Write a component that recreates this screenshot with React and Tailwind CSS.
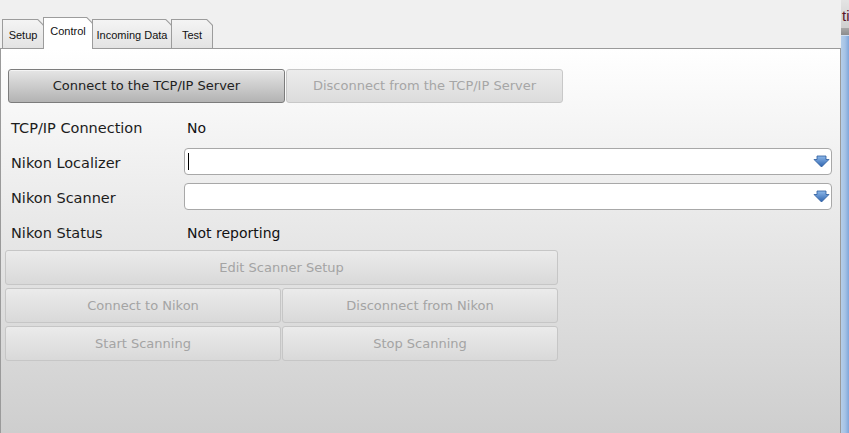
import React from 'react';

const tabs = [
    { name: 'Setup', w: 'w-[42px]' },
    { name: 'Control', w: 'w-[50px]', active: true },
    { name: 'Incoming Data', w: 'w-[80px]' },
    { name: 'Test', w: 'w-[42px]' },
];

const Tab = ({ name, w, active }) => (
    <div
        className={`${w} ${active ? 'h-[32px] -mb-[1px] z-10' : 'h-[29px]'} bg-[#9c9c9c] pt-[1px] px-[1px] -mr-[1px] [clip-path:polygon(0_0,calc(100%-6px)_0,100%_6px,100%_100%,0_100%)]`}
    >
        <div
            className={`h-full flex items-center justify-center text-[11px] text-[#111] [clip-path:polygon(0_0,calc(100%-5.5px)_0,100%_5.5px,100%_100%,0_100%)] ${active ? 'bg-white pb-[4px]' : 'bg-gradient-to-b from-[#f4f4f4] to-[#e3e3e3] pt-[2px]'}`}
        >
            {name}
        </div>
    </div>
);

const DisabledButton = ({ children, className = '' }) => (
    <div
        className={`h-[35px] flex items-center justify-center rounded-[3px] border border-[#c6c6c6] bg-gradient-to-b from-[#ebebeb] to-[#d9d9d9] text-[13px] text-[#a4a4a4] ${className}`}
    >
        {children}
    </div>
);

const Arrow = () => (
    <svg width="17" height="13" viewBox="0 0 17 13">
        <defs>
            <linearGradient id="ar" x1="0" y1="0" x2="0" y2="1">
                <stop offset="0" stopColor="#8db8ea" />
                <stop offset="1" stopColor="#2c62ad" />
            </linearGradient>
        </defs>
        <polygon points="4,1 13,1 13,4.5 16,4.5 8.5,12 1,4.5 4,4.5" fill="url(#ar)" stroke="#2b5a9c" strokeWidth="0.8" />
    </svg>
);

const Combo = ({ caret }) => (
    <div className="flex-1 h-[27px] rounded-[4px] border border-[#a8a8a8] bg-white flex items-center pl-[3px] pr-[1px] mr-[8px]">
        <div className="flex-1 flex items-center">
            {caret && <div className="w-[1px] h-[17px] bg-black" />}
        </div>
        <Arrow />
    </div>
);

const Row = ({ label, children }) => (
    <div className="h-[27px] flex items-center">
        <div className="w-[183px] pl-[10px] pt-[4px] text-[14.5px] text-[#1c1c1c]">{label}</div>
        {children}
    </div>
);

export default function App() {
    return (
        <div className="w-[849px] h-[433px] flex overflow-hidden bg-[#f0f0f0] font-['DejaVu_Sans',sans-serif]">
            <div className="w-[841px] flex flex-col">
                <div className="h-[48px] flex items-end pl-[2px] font-['Liberation_Sans',Arial,sans-serif]">
                    {tabs.map((t) => (
                        <Tab key={t.name} {...t} />
                    ))}
                </div>
                <div className="flex-1 border-t border-l border-r border-[#9a9a9a] bg-gradient-to-b from-white to-[#cecece] flex flex-col">
                    <div className="flex mt-[20px] ml-[7px] h-[34px]">
                        <div className="w-[277px] flex items-center justify-center rounded-[3px] border border-[#7c7c7c] bg-gradient-to-b from-[#e6e6e6] to-[#b3b3b3] text-[13px] text-[#222] shadow-[inset_0_1px_0_#f4f4f4]">
                            Connect to the TCP/IP Server
                        </div>
                        <div className="w-[277px] ml-[1px] flex items-center justify-center rounded-[3px] border border-[#c8c8c8] bg-gradient-to-b from-[#ececec] to-[#dcdcdc] text-[13px] text-[#a6a6a6]">
                            Disconnect from the TCP/IP Server
                        </div>
                    </div>
                    <div className="flex flex-col gap-[8px] mt-[10px]">
                        <Row label="TCP/IP Connection">
                            <div className="pl-[3px] pt-[4px] text-[14px] text-[#111]">No</div>
                        </Row>
                        <Row label="Nikon Localizer">
                            <Combo caret />
                        </Row>
                        <Row label="Nikon Scanner">
                            <Combo />
                        </Row>
                        <Row label="Nikon Status">
                            <div className="pl-[3px] pt-[4px] text-[14px] text-[#111]">Not reporting</div>
                        </Row>
                    </div>
                    <div className="w-[553px] ml-[4px] mt-[5px] flex flex-col gap-[3px]">
                        <DisabledButton>Edit Scanner Setup</DisabledButton>
                        <div className="flex gap-[1px]">
                            <DisabledButton className="flex-1">Connect to Nikon</DisabledButton>
                            <DisabledButton className="flex-1">Disconnect from Nikon</DisabledButton>
                        </div>
                        <div className="flex gap-[1px]">
                            <DisabledButton className="flex-1">Start Scanning</DisabledButton>
                            <DisabledButton className="flex-1">Stop Scanning</DisabledButton>
                        </div>
                    </div>
                </div>
            </div>
            <div className="w-[8px] flex flex-col overflow-hidden">
                <div className="h-[28px] bg-gradient-to-b from-[#e4e4e4] to-[#cfcfcf] overflow-hidden">
                    <div className="pt-[8px] pl-[1px] text-[15px] leading-none text-[#5a1428] font-['Liberation_Sans',sans-serif] whitespace-nowrap">ti</div>
                </div>
                <div className="h-[7px] bg-gradient-to-b from-[#a8a8a8] to-[#8c8c8c]" />
                <div className="flex-1 bg-gradient-to-r from-[#b4cde9] via-[#a6c3e6] to-[#7fa6da] border-t border-[#d0dff0]" />
            </div>
        </div>
    );
}
